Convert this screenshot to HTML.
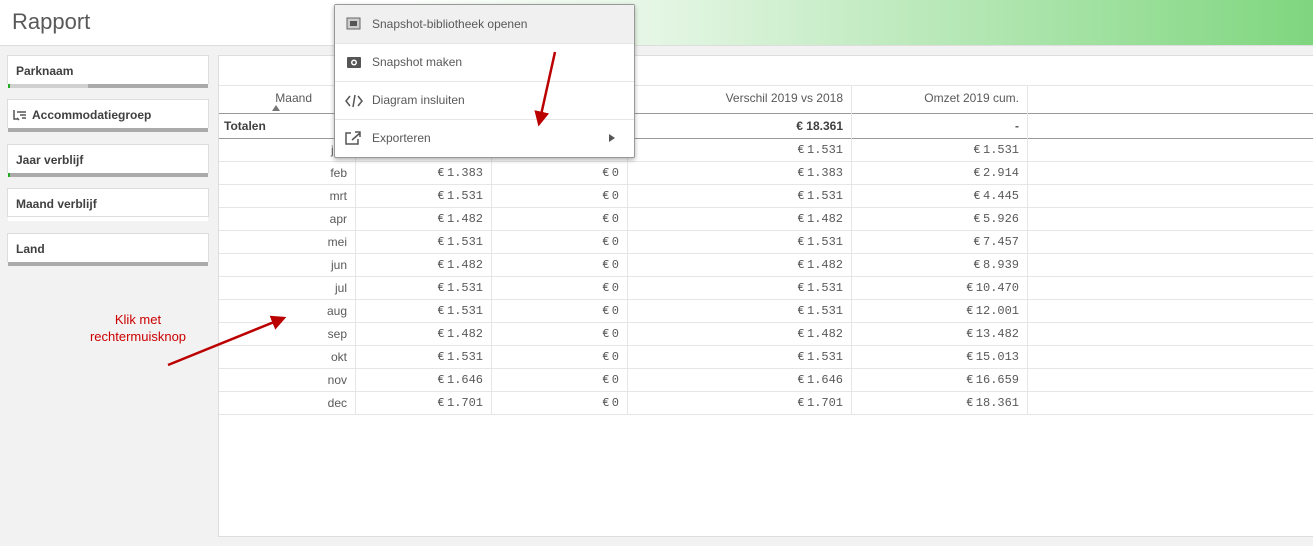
<!DOCTYPE html><html><head><style>
body{margin:0;width:1313px;height:546px;overflow:hidden;background:#f2f2f2;font-family:"Liberation Sans",sans-serif;position:relative}
.hdr{position:absolute;left:0;top:0;width:1313px;height:45px;background:linear-gradient(90deg,#fff 0%,#fff 30%,#e8f7e8 48%,#7fd67f 100%);border-bottom:1px solid #ddd}
.hdr span{position:absolute;left:12px;top:9px;font-size:22px;color:#595959}
.f{position:absolute;left:7px;width:202px;height:29px;background:#fff;border:1px solid #ddd;border-bottom:none;box-sizing:border-box}
.f b{position:absolute;left:8px;top:8px;font-size:12px;color:#404040}
.f i{position:absolute;left:0;right:0;bottom:-4px;height:4px;background:#aaa}
.panel{position:absolute;left:218px;top:55px;width:1100px;height:480px;background:#fff;border:1px solid #ddd}
.c{position:absolute;font-size:12px;color:#595959;text-align:right}
.m{font-family:"Liberation Mono",monospace;font-size:12px}
.hl{position:absolute;left:219px;width:1094px;height:1px;background:#e6e6e6}
.vl{position:absolute;width:1px;background:#e6e6e6;top:85px;height:330px}
.menu{position:absolute;left:334px;top:4px;width:299px;height:152px;background:#fff;border:1px solid #999;border-radius:2px;box-shadow:0 2px 5px rgba(0,0,0,.3)}
.mi{position:absolute;left:0;width:299px;height:38px;border-bottom:1px solid #e6e6e6;font-size:12px;color:#595959}
.mi span{position:absolute;left:37px;top:12px}
</style></head><body>
<div class="hdr"><span>Rapport</span></div>
<div class="f" style="top:55px"><b>Parknaam</b><i style="background:linear-gradient(90deg,#2a2 0,#2a2 2px,#d0d0d0 2px,#d0d0d0 40%,#aaa 40%)"></i></div>
<div class="f" style="top:99px"><b style="left:24px">Accommodatiegroep</b><svg style="position:absolute;left:5px;top:9px" width="14" height="12"><path d="M1 1v9h4M4 3h9M7 6h6M9 9h4M4 9l2 2" stroke="#555" fill="none" stroke-width="1.5"/></svg><i></i></div>
<div class="f" style="top:144px"><b>Jaar verblijf</b><i style="background:linear-gradient(90deg,#2a2 0,#2a2 2px,#aaa 2px)"></i></div>
<div class="f" style="top:188px"><b>Maand verblijf</b><i style="background:#fff;border-top:1px solid #ddd"></i></div>
<div class="f" style="top:233px"><b>Land</b><i></i></div>
<div class="panel"></div>
<div class="hl" style="top:85px"></div>
<div class="hl" style="top:113px;background:#999"></div>
<div class="hl" style="top:138px;background:#999"></div>
<div class="vl" style="left:355px"></div><div class="vl" style="left:491px"></div><div class="vl" style="left:627px"></div><div class="vl" style="left:851px"></div><div class="vl" style="left:1027px"></div>
<div class="c" style="left:260px;top:91px;width:52px">Maand</div>
<div style="position:absolute;left:272px;top:105px;border:4px solid transparent;border-bottom:6px solid #777;border-top:none"></div>
<div class="c" style="left:627px;top:91px;width:216px">Verschil 2019 vs 2018</div>
<div class="c" style="left:851px;top:91px;width:168px">Omzet 2019 cum.</div>
<div style="position:absolute;left:224px;top:119px;font-size:12px;font-weight:bold;color:#404040">Totalen</div>
<div class="c" style="left:627px;top:119px;width:216px;font-weight:bold;color:#404040">€ 18.361</div>
<div class="c" style="left:851px;top:119px;width:168px;font-weight:bold">-</div>
<div id="rows"></div>
<script>
var d=[["jan","1.531","0","1.531","1.531"],["feb","1.383","0","1.383","2.914"],["mrt","1.531","0","1.531","4.445"],["apr","1.482","0","1.482","5.926"],["mei","1.531","0","1.531","7.457"],["jun","1.482","0","1.482","8.939"],["jul","1.531","0","1.531","10.470"],["aug","1.531","0","1.531","12.001"],["sep","1.482","0","1.482","13.482"],["okt","1.531","0","1.531","15.013"],["nov","1.646","0","1.646","16.659"],["dec","1.701","0","1.701","18.361"]];
var h="";d.forEach(function(r,i){var t=138+i*23;
h+='<div class="c" style="left:220px;top:'+(t+5)+'px;width:127px">'+r[0]+'</div>';
h+='<div class="c m" style="left:355px;top:'+(t+5)+'px;width:128px">€\u2009'+r[1]+'</div>';
h+='<div class="c m" style="left:491px;top:'+(t+5)+'px;width:128px">€\u2009'+r[2]+'</div>';
h+='<div class="c m" style="left:627px;top:'+(t+5)+'px;width:216px">€\u2009'+r[3]+'</div>';
h+='<div class="c m" style="left:851px;top:'+(t+5)+'px;width:168px">€\u2009'+r[4]+'</div>';
h+='<div class="hl" style="top:'+(t+23)+'px"></div>';});
document.getElementById("rows").innerHTML=h;
</script>
<div class="menu">
<div class="mi" style="top:0;background:#f0f0f0"><svg style="position:absolute;left:11px;top:12px" width="16" height="14"><rect x="1" y="1" width="13" height="11" fill="#ccc" stroke="#666"/><rect x="4" y="4" width="7" height="5" fill="#555"/></svg><span>Snapshot-bibliotheek openen</span></div>
<div class="mi" style="top:38px"><svg style="position:absolute;left:11px;top:12px" width="16" height="14"><rect x="1" y="2" width="14" height="11" rx="1" fill="#555"/><circle cx="8" cy="7.5" r="3" fill="#fff"/><circle cx="8" cy="7.5" r="1.5" fill="#555"/></svg><span>Snapshot maken</span></div>
<div class="mi" style="top:76px"><svg style="position:absolute;left:10px;top:13px" width="18" height="14"><path d="M5 2L1 7l4 5M13 2l4 5-4 5M10 1L8 13" stroke="#555" fill="none" stroke-width="1.5"/></svg><span>Diagram insluiten</span></div>
<div class="mi" style="top:114px;border:none"><svg style="position:absolute;left:10px;top:11px" width="17" height="15"><path d="M6 3H1v11h12V9M7 10l8-7M10 2h5v5" stroke="#555" fill="none" stroke-width="1.5"/></svg><span>Exporteren</span><div style="position:absolute;left:274px;top:15px;border:4px solid transparent;border-left:6px solid #555;border-right:none"></div></div>
</div>
<svg style="position:absolute;left:0;top:0" width="1313" height="546"><defs><marker id="a" markerWidth="6" markerHeight="6" refX="5" refY="3" orient="auto"><path d="M0 0L6 3L0 6z" fill="#b00"/></marker></defs>
<line x1="168" y1="365" x2="284" y2="318" stroke="#b00" stroke-width="2.5" marker-end="url(#a)"/>
<line x1="555" y1="52" x2="539" y2="124" stroke="#b00" stroke-width="2.5" marker-end="url(#a)"/></svg>
<div style="position:absolute;left:68px;top:311px;width:140px;text-align:center;font-size:13px;color:#c00;line-height:17px">Klik met<br>rechtermuisknop</div>
</body></html>
